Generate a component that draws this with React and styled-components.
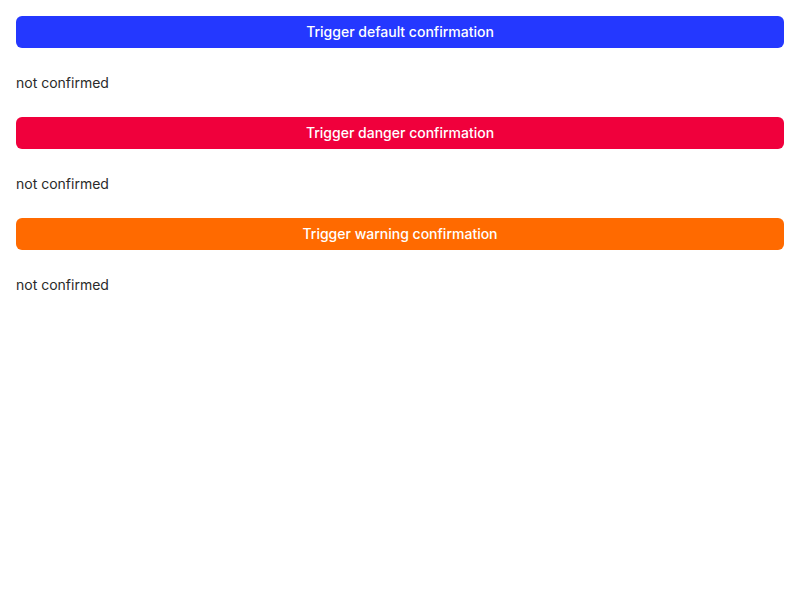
import styled, { createGlobalStyle } from 'styled-components';

const Global = createGlobalStyle`
  body {
    margin: 0;
    background: #fff;
    font-family: Inter, "Noto Sans", sans-serif;
  }
`;

const Page = styled.div`
  padding: 16px;
  display: flex;
  flex-direction: column;
`;

const colors = {
  default: '#2438ff',
  danger: '#f0003c',
  warning: '#ff6a00',
};

const Trigger = styled.button`
  height: 32px;
  padding: 0 0 1px;
  border: none;
  border-radius: 6px;
  background: ${p => colors[p.$variant]};
  color: #fff;
  font-family: Inter, sans-serif;
  font-size: 14px;
  font-weight: 500;
  line-height: 20px;
  cursor: pointer;
`;

const Status = styled.p`
  margin: 25px 0 24px;
  line-height: 20px;
  font-size: 14px;
  color: #2a2a2a;
`;

const items = ['default', 'danger', 'warning'];

export default function App() {
  return (
    <Page>
      <Global />
      {items.map(v => (
        <div key={v} style={{ display: 'contents' }}>
          <Trigger $variant={v}>Trigger {v} confirmation</Trigger>
          <Status>not confirmed</Status>
        </div>
      ))}
    </Page>
  );
}
